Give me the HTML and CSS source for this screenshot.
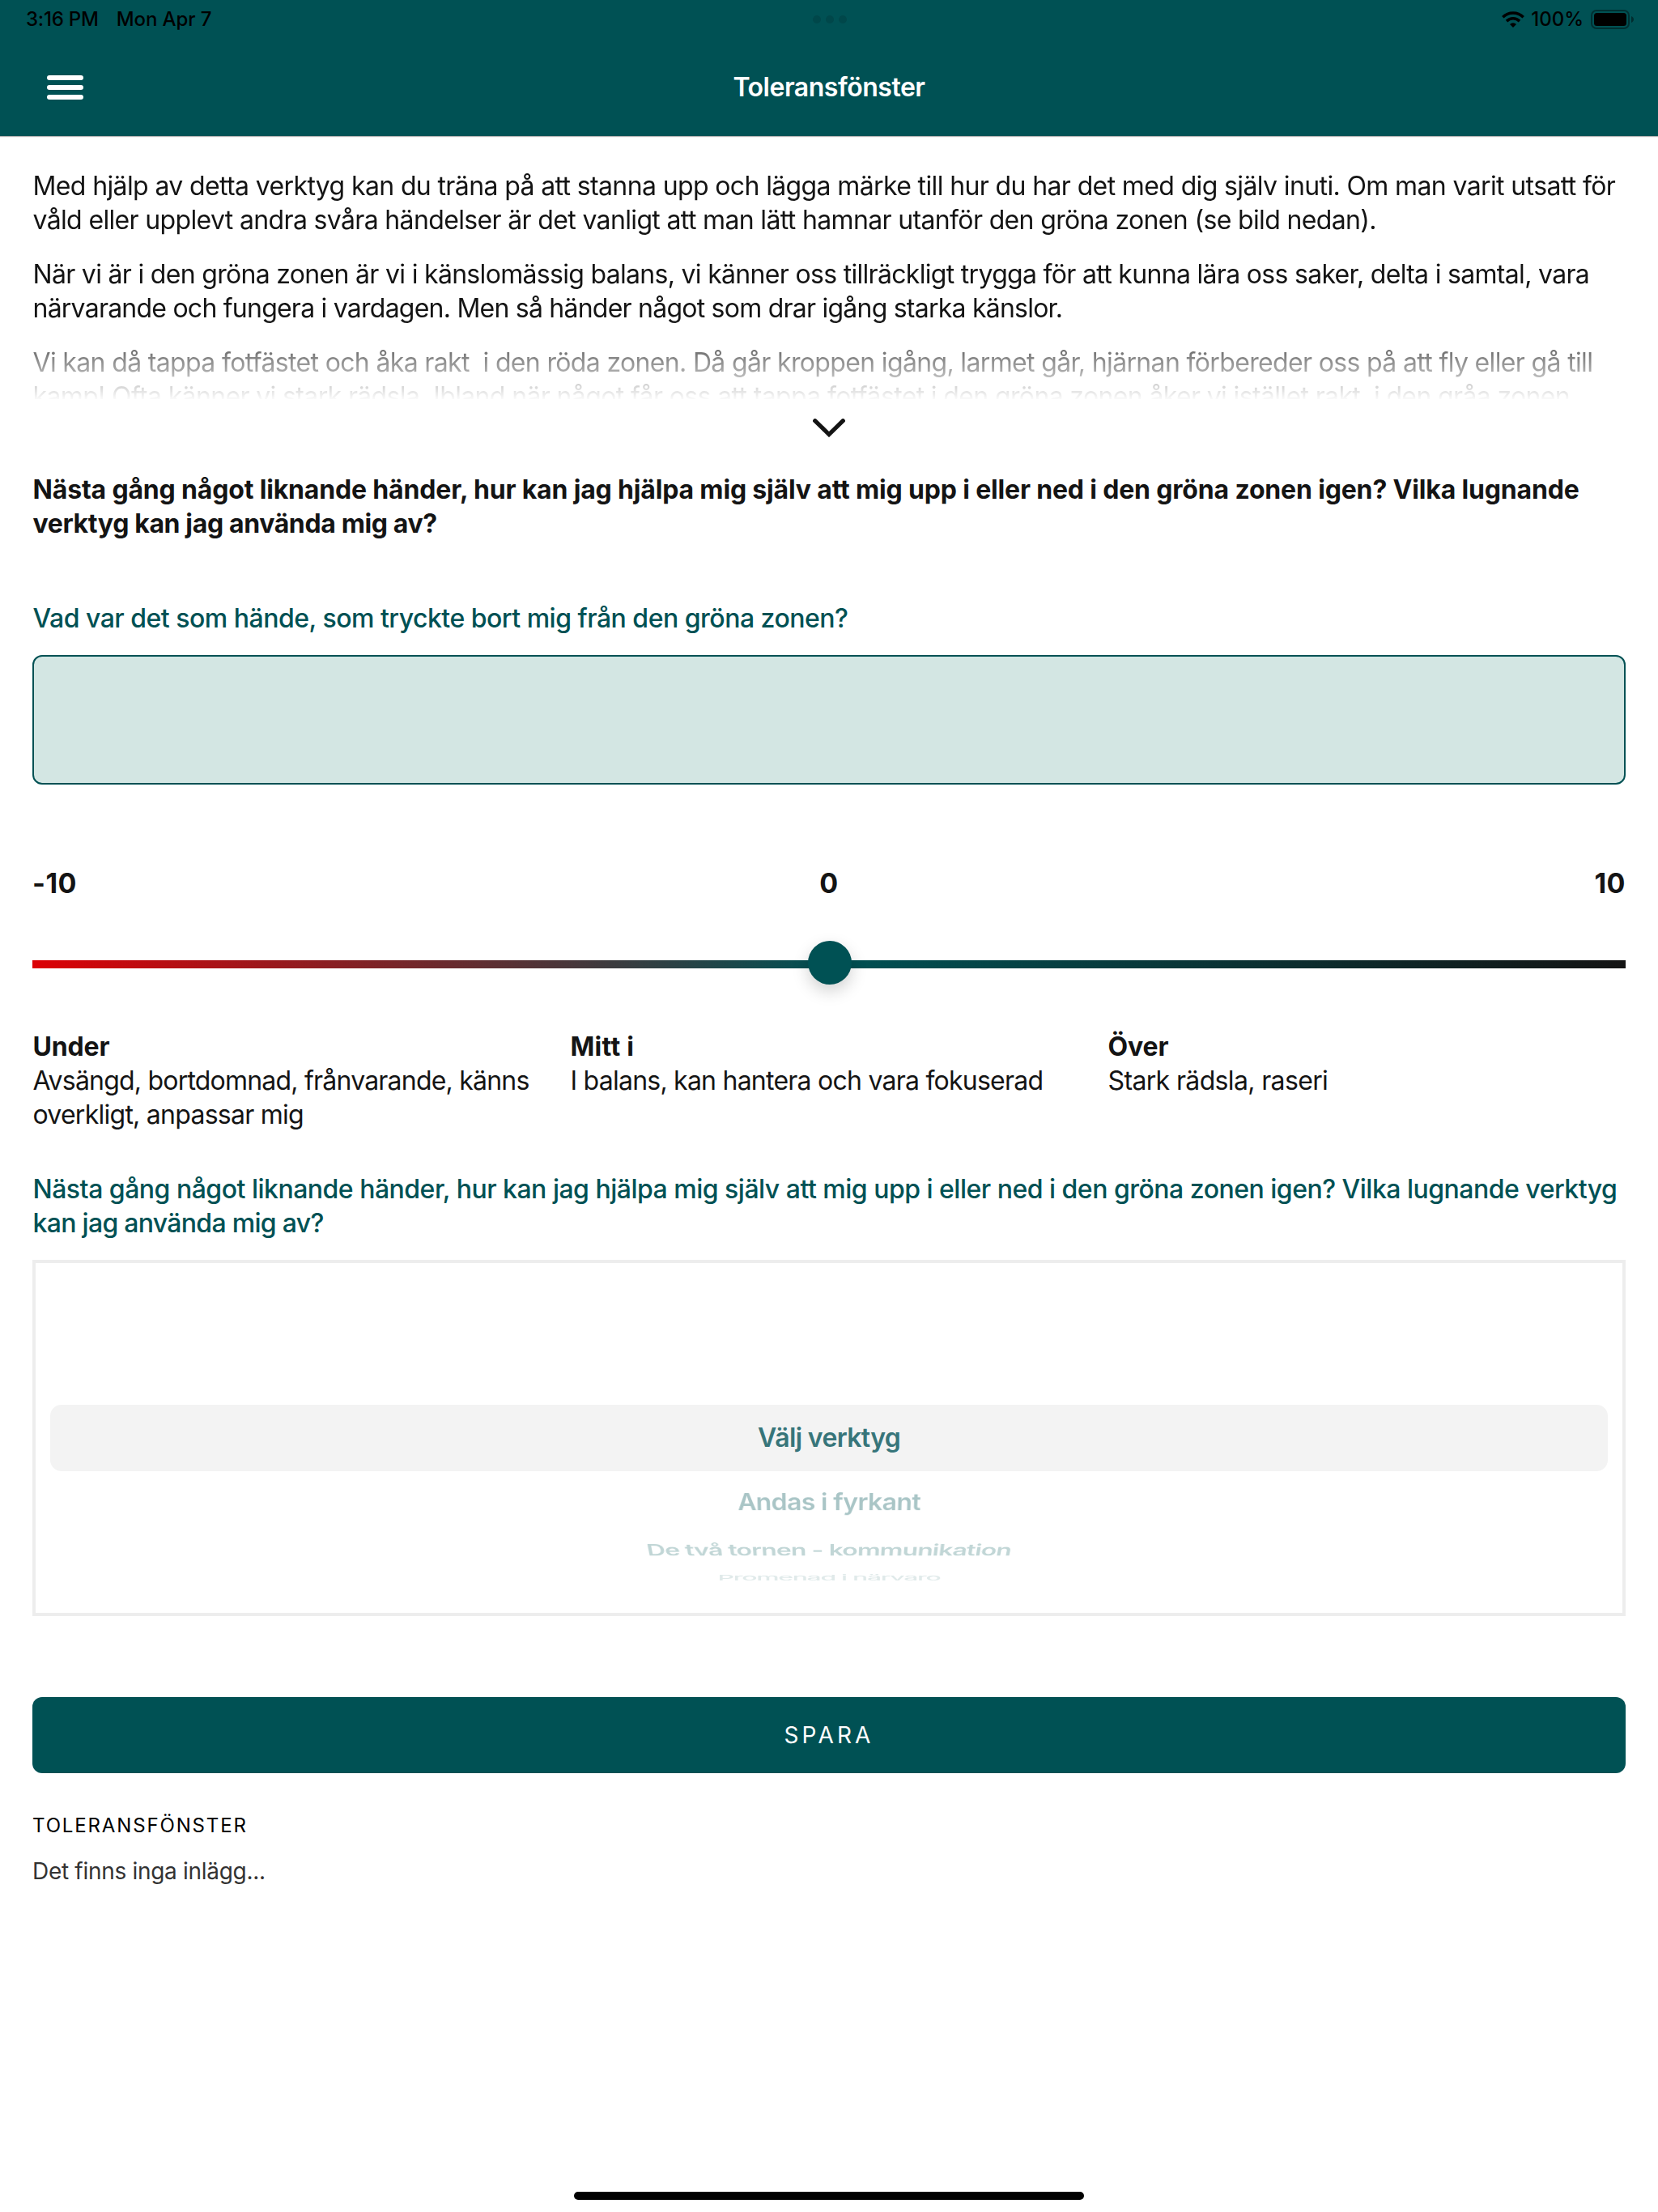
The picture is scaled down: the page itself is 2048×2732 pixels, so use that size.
FILE: index.html
```html
<!DOCTYPE html>
<html lang="sv">
<head>
<meta charset="utf-8">
<title>Toleransfönster</title>
<link rel="stylesheet" href="styles.css">
</head>
<body>
<header class="header">
  <div class="status">
    <div class="status-left"><span class="time">3:16 PM</span><span class="date">Mon Apr 7</span></div>
    <div class="dots"><i></i><i></i><i></i></div>
    <div class="status-right">
      <svg class="wifi" width="28" height="20" viewBox="0 0 28 20"><g fill="none" stroke="#000" stroke-width="3.6"><path d="M1.3 7.2A18 18 0 0 1 26.7 7.2"/><path d="M6 12.1A11.4 11.4 0 0 1 22 12.1"/></g><path d="M14 20l-4-4.1a5.8 5.8 0 0 1 8 0z"/></svg>
      <span class="pct">100%</span>
      <svg class="battery" width="53" height="24" viewBox="0 0 53 24"><rect x="1" y="1" width="46" height="22" rx="6" fill="none" stroke="#000" stroke-opacity=".4" stroke-width="2"/><rect x="4" y="4" width="40" height="16" rx="3.5"/><path d="M50 8c4 1.500 4 6.500 0 8z" fill-opacity=".45"/></svg>
    </div>
  </div>
  <div class="nav">
    <div class="menu"><i></i><i></i><i></i></div>
    <h1 class="title">Toleransfönster</h1>
  </div>
</header>
<main class="main">
  <section class="intro">
    <p><span class="ln intro-1">Med hjälp av detta verktyg kan du träna på att stanna upp och lägga märke till hur du har det med dig själv inuti. Om man varit utsatt för</span>
    <span class="ln intro-2">våld eller upplevt andra svåra händelser är det vanligt att man lätt hamnar utanför den gröna zonen (se bild nedan).</span></p>
    <p><span class="ln intro-3">När vi är i den gröna zonen är vi i känslomässig balans, vi känner oss tillräckligt trygga för att kunna lära oss saker, delta i samtal, vara</span>
    <span class="ln intro-4">närvarande och fungera i vardagen. Men så händer något som drar igång starka känslor.</span></p>
    <p><span class="ln intro-5">Vi kan då tappa fotfästet och åka rakt  i den röda zonen. Då går kroppen igång, larmet går, hjärnan förbereder oss på att fly eller gå till</span>
    <span class="ln intro-6">kamp! Ofta känner vi stark rädsla. Ibland när något får oss att tappa fotfästet i den gröna zonen åker vi istället rakt  i den gråa zonen.</span></p>
  </section>
  <div class="expand"><svg width="40" height="23" viewBox="0 0 40 23"><path d="M2.700 2.700L20 19.500L37.300 2.700" fill="none" stroke="#141414" stroke-width="5.200" stroke-linecap="round"/></svg></div>
  <h2 class="lead"><span class="ln lead-1">Nästa gång något liknande händer, hur kan jag hjälpa mig själv att mig upp i eller ned i den gröna zonen igen? Vilka lugnande</span>
  <span class="ln lead-2">verktyg kan jag använda mig av?</span></h2>
  <label class="question"><span class="ln event-1">Vad var det som hände, som tryckte bort mig från den gröna zonen?</span></label>
  <div class="textarea"></div>
  <div class="scale"><span>-10</span><span>0</span><span>10</span></div>
  <div class="track"><div class="thumb"></div></div>
  <div class="legend">
    <div><b>Under</b><span class="ln under-1">Avsängd, bortdomnad, frånvarande, känns</span><span class="ln under-2">overkligt, anpassar mig</span></div>
    <div><b class="mid-title">Mitt i</b><span class="ln mid-1">I balans, kan hantera och vara fokuserad</span></div>
    <div><b>Över</b><span class="ln over-1">Stark rädsla, raseri</span></div>
  </div>
  <label class="question"><span class="ln tools-1">Nästa gång något liknande händer, hur kan jag hjälpa mig själv att mig upp i eller ned i den gröna zonen igen? Vilka lugnande verktyg</span>
  <span class="ln tools-2">kan jag använda mig av?</span></label>
  <div class="picker">
    <div class="option selected">Välj verktyg</div>
    <div class="option o1">Andas i fyrkant</div>
    <div class="option o2">De två tornen - kommunikation</div>
    <div class="option o3">Promenad i närvaro</div>
  </div>
  <button class="save">SPARA</button>
  <h3 class="log-title">TOLERANSFÖNSTER</h3>
  <p class="log-empty">Det finns inga inlägg...</p>
</main>
<div class="home"></div>
</body>
</html>
```
FILE: styles.css
```css
* { box-sizing: border-box; }
body { margin: 0; width: 2048px; height: 2732px; display: flex; flex-direction: column; background: #fff; color: #141414; font: 400 32px/42px Inter, "Liberation Sans", sans-serif; overflow: hidden; }
h1, h2, h3, p { margin: 0; font-size: inherit; font-weight: inherit; }
.ln { display: block; white-space: pre; padding-left: .5px; }

.header { height: 168px; background: #005154; box-shadow: 0 1px 1px rgba(0,0,0,.3); flex: none; }
.status { height: 48px; padding: 0 30px 0 32px; display: grid; grid-template-columns: 1fr auto 1fr; align-items: center; color: #000; font-size: 24px; font-weight: 500; line-height: 30px; }
.status-left { display: flex; gap: 22px; }
.time { letter-spacing: -.2px; }
.date { letter-spacing: -.1px; }
.dots { display: flex; gap: 6px; }
.dots i { width: 10px; height: 10px; border-radius: 50%; background: #00474a; }
.status-right { display: flex; justify-content: flex-end; align-items: center; }
.pct { margin: 0 9px 0 8px; }
.nav { height: 120px; padding: 39px 57px 0; display: grid; grid-template-columns: 1fr auto 1fr; align-items: center; align-content: start; }
.menu { display: grid; gap: 6px; width: 45px; margin: 0 0 1px .5px; }
.menu i { height: 6px; border-radius: 3px; background: #fff; }
.title { color: #fff; font-weight: 600; letter-spacing: -.47px; }

.main { padding: 41px 40px 0; display: flex; flex-direction: column; }
.intro { height: 284px; overflow: hidden; display: flex; flex-direction: column; gap: 25px; -webkit-mask: linear-gradient(#000 184px, transparent 286px); mask: linear-gradient(#000 184px, transparent 286px); }
.intro-1 { letter-spacing: -.626px; }
.intro-2 { letter-spacing: -.65px; }
.intro-3 { letter-spacing: -.69px; }
.intro-4 { letter-spacing: -.768px; }
.intro-5 { letter-spacing: -.654px; }
.intro-6 { letter-spacing: -.636px; }
.expand { height: 70px; margin-bottom: 21px; display: flex; justify-content: center; align-items: center; }
.lead { font-weight: 700; margin-bottom: 75px; }
.lead-1 { letter-spacing: -.169px; }
.lead-2 { letter-spacing: -.37px; }
.question { color: #005154; font-weight: 500; margin-bottom: 24px; }
.event-1 { letter-spacing: -.5px; }
.tools-1 { letter-spacing: -.504px; }
.tools-2 { letter-spacing: -.7px; }
.textarea { height: 160px; border: 2px solid #005154; border-radius: 12px; background: #d3e6e3; margin-bottom: 101px; }

.scale { display: grid; grid-template-columns: 1fr auto 1fr; font-size: 34px; font-weight: 700; letter-spacing: .5px; margin-bottom: 74px; }
.scale :last-child { text-align: right; }
.track { height: 10px; background: linear-gradient(90deg, #dc0005, #005154 50%, #141414); margin-bottom: 76px; display: flex; justify-content: center; align-items: center; }
.thumb { flex: none; width: 54px; height: 54px; border-radius: 50%; background: #005154; box-shadow: 0 8px 20px rgba(0,0,0,.18); transform: translate(1px, -2px); }
.legend { display: grid; grid-template-columns: repeat(3, 1fr); column-gap: 24px; margin-bottom: 50px; }
.legend b { display: block; letter-spacing: -.15px; padding-left: .5px; }
.legend .mid-title { letter-spacing: .3px; }
.under-1 { letter-spacing: -.79px; }
.under-2 { letter-spacing: -.74px; }
.mid-1 { letter-spacing: -.76px; }
.over-1 { letter-spacing: -.64px; }

.picker { height: 440px; border: 4px solid #ededed; padding: 175px 18px 0; margin-bottom: 100px; text-align: center; color: #005154; font-weight: 600; overflow: hidden; }
.selected { height: 82px; line-height: 82px; border-radius: 14px; background: #f3f3f3; color: #37757a; letter-spacing: -.65px; }
.o1 { height: 70px; line-height: 77px; color: #a9c5c6; letter-spacing: -.6px; transform: perspective(1500px) rotateX(-28deg); }
.o2 { height: 52px; line-height: 58px; color: #c1d6d6; letter-spacing: -.9px; transform: perspective(1500px) rotateX(-53deg); }
.o3 { height: 20px; line-height: 20px; color: #e0eaea; font-weight: 500; letter-spacing: -1.33px; transform: scaleY(.3); }

.save { height: 94px; padding: 0; border: 0; border-radius: 12px; background: #005154; color: #fff; font: 400 28px/36px Inter, "Liberation Sans", sans-serif; letter-spacing: 4.1px; margin-bottom: 50px; }
.log-title { color: #000; font-size: 24px; line-height: 30px; letter-spacing: 1.85px; margin-bottom: 23px; }
.log-empty { color: #333; font-size: 28px; line-height: 36px; letter-spacing: -.3px; }
.home { width: 630px; height: 10px; border-radius: 5px; background: #000; margin: auto auto 15px; flex: none; }
```
